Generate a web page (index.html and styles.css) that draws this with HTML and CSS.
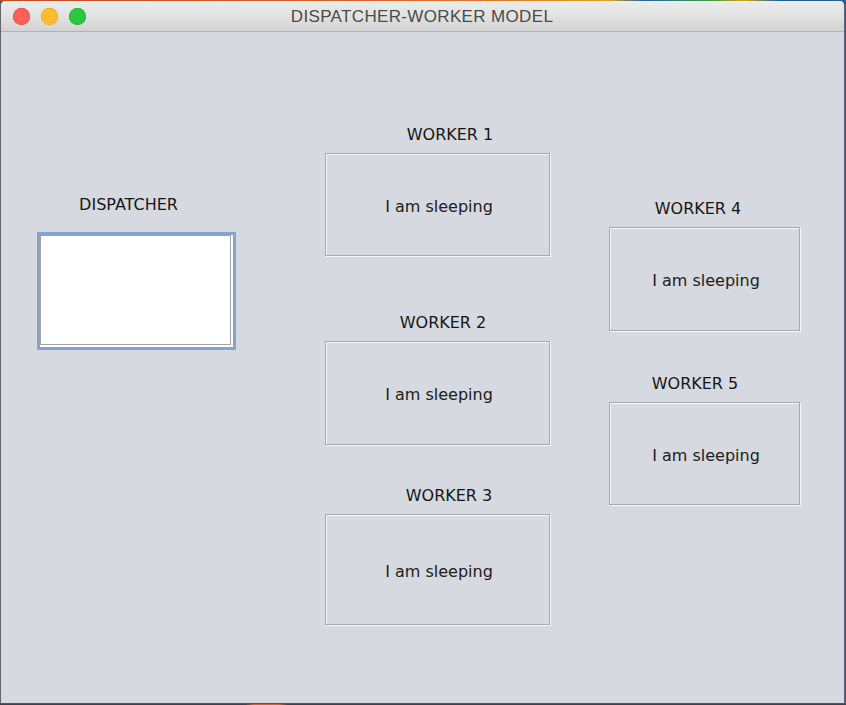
FILE: index.html
```html
<!DOCTYPE html>
<html lang="en">
<head>
<meta charset="utf-8">
<title>DISPATCHER-WORKER MODEL</title>
<link rel="stylesheet" href="styles.css">
</head>
<body>
<div class="window">
  <div class="titlebar">
    <div class="lights">
      <span class="light light-red"></span>
      <span class="light light-yellow"></span>
      <span class="light light-green"></span>
    </div>
    <div class="title">DISPATCHER-WORKER MODEL</div>
    <div class="spacer"></div>
  </div>
  <div class="content">
    <div class="col col-dispatcher">
      <div class="label label-dispatcher">DISPATCHER</div>
      <div class="textarea"><div class="textarea-inner"></div></div>
    </div>
    <div class="col col-mid">
      <div class="group">
        <div class="label label-w1">WORKER 1</div>
        <div class="box box-103">I am sleeping</div>
      </div>
      <div class="group group-w2">
        <div class="label label-w2">WORKER 2</div>
        <div class="box box-104">I am sleeping</div>
      </div>
      <div class="group group-w3">
        <div class="label label-w3">WORKER 3</div>
        <div class="box box-111">I am sleeping</div>
      </div>
    </div>
    <div class="col col-right">
      <div class="group">
        <div class="label label-w4">WORKER 4</div>
        <div class="box box-104">I am sleeping</div>
      </div>
      <div class="group group-w5">
        <div class="label label-w5">WORKER 5</div>
        <div class="box box-103">I am sleeping</div>
      </div>
    </div>
  </div>
</div>
</body>
</html>
```

FILE: styles.css
```css
* { box-sizing: border-box; }

html, body {
  margin: 0;
  padding: 0;
  width: 846px;
  height: 705px;
  overflow: hidden;
}

body {
  background:
    linear-gradient(to right, #c44a1c 0%, #d8602a 40%, #e07a2c 60%, #d8a326 72%, #2563a3 76%, #3a9a42 84%, #d2a424 88%, #1f5d9c 92%, #245e9a 100%) top left / 100% 1px no-repeat,
    linear-gradient(to right, #3b4250 0%, #3b4250 29%, #c8643a 30%, #c8643a 33%, #3b4250 34%) bottom left / 100% 1px no-repeat,
    #2f5d8e;
}

.window {
  margin-top: 1px;
  width: 845px;
  height: 703px;
  display: flex;
  flex-direction: column;
  border-left: 1px solid #5f646d;
  border-right: 1px solid #5f646d;
  border-bottom: 1px solid #4f545d;
  border-radius: 5px 5px 0 0;
  overflow: hidden;
  background: #d6d9df;
}

.titlebar {
  height: 31px;
  flex: none;
  display: grid;
  grid-template-columns: 1fr auto 1fr;
  align-items: center;
  background: linear-gradient(to bottom, #ececec 0%, #e2e2e2 50%, #d3d3d3 100%);
  border-bottom: 1px solid #b3b3b3;
}

.lights {
  display: flex;
  gap: 11px;
  padding-left: 12px;
  padding-top: 1px;
}

.light {
  width: 17px;
  height: 17px;
  border-radius: 50%;
  display: block;
}

.light-red { background: #fc5f57; box-shadow: inset 0 0 0 0.5px #e0443e; }
.light-yellow { background: #fdbc2e; box-shadow: inset 0 0 0 0.5px #dea123; }
.light-green { background: #2ac840; box-shadow: inset 0 0 0 0.5px #1dad2b; }

.title {
  font-family: "Liberation Sans", Arial, sans-serif;
  font-size: 17px;
  letter-spacing: 0.35px;
  color: #4b4b4b;
  line-height: 20px;
  padding-top: 2px;
  padding-right: 1px;
  white-space: nowrap;
}

.content {
  flex: 1;
  display: flex;
  align-items: flex-start;
  padding-left: 36px;
  background: #d6d9df;
  font-family: "DejaVu Sans", Verdana, sans-serif;
  font-size: 16px;
  color: #1e1e1e;
}

.col {
  display: flex;
  flex-direction: column;
  flex: none;
}

.col-dispatcher {
  width: 199px;
  padding-top: 163px;
  gap: 18px;
}

.col-mid {
  width: 226px;
  margin-left: 89px;
  padding-top: 93px;
}

.col-right {
  width: 192px;
  margin-left: 58px;
  padding-top: 167px;
}

.group {
  display: flex;
  flex-direction: column;
  gap: 9px;
}

.group-w2 { margin-top: 57px; }
.group-w3 { margin-top: 41px; }
.group-w5 { margin-top: 43px; }

.label {
  height: 19px;
  line-height: 19px;
  text-align: center;
  white-space: nowrap;
  color: #161616;
}

.label-dispatcher { padding-right: 16px; }
.label-w1 { padding-left: 24px; }
.label-w2 { padding-left: 10px; }
.label-w3 { padding-left: 22px; }
.label-w4 { padding-right: 14px; }
.label-w5 { padding-right: 20px; }

.textarea {
  width: 199px;
  height: 118px;
  border: 3px solid #84a4cf;
  background: #ffffff;
  padding: 0 2px 2px 0;
}

.textarea-inner {
  width: 100%;
  height: 100%;
  border: 1px solid #a4a4a4;
  background: #ffffff;
}

.box {
  width: calc(100% - 1px);
  border: 1px solid #a7a9ad;
  box-shadow: inset 1px 1px 0 #f6f7f9, 1px 1px 0 #f6f7f9;
  display: flex;
  align-items: center;
  justify-content: center;
  padding-top: 3px;
  padding-left: 3px;
  line-height: 19px;
  color: #202020;
  white-space: nowrap;
}

.box-103 { height: 103px; }
.box-104 { height: 104px; }
.box-111 { height: 111px; }
```
